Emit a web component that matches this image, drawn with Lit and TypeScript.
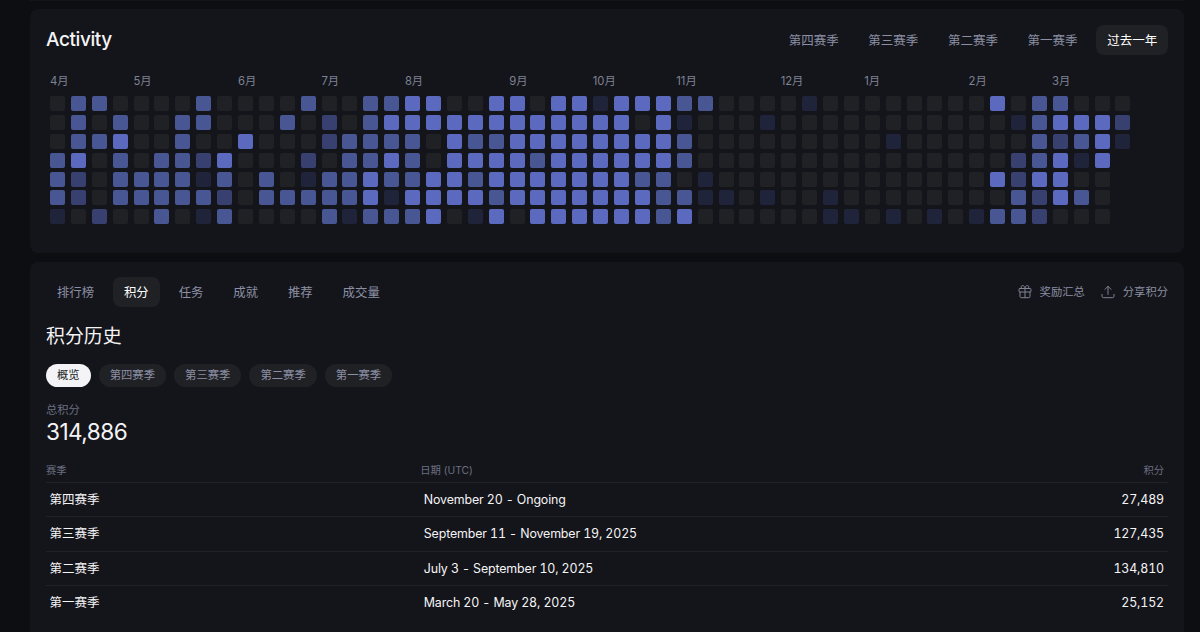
import { LitElement, html, css, svg } from "lit";
import { customElement } from "lit/decorators.js";

// One string per weekday: digits are intensity levels, a dot is a day still to come.
const DAYS: string[] = [
  "033000030000" + "3003344004404" + "4144433000010" + "0" + "0000004033000",
  "030300330003" + "0203444444444" + "4440410001000" + "0" + "0000000134442",
  "033400300400" + "0233330433444" + "4444430000000" + "0" + "0100000032341",
  "340303324000" + "2033430444434" + "4444430000000" + "0" + "000000023414.",
  "320333313030" + "1334334434444" + "4443301000000" + "0" + "000000424400.",
  "320333332033" + "3334144443444" + "4444331101001" + "0" + "000000032430.",
  "102003013000" + "0313334014044" + "4444340000001" + "1" + "010101332000.",
];

const MONTHS: [string, number][] = [
  ["4月", 0], ["5月", 4], ["6月", 9], ["7月", 13], ["8月", 17], ["9月", 22],
  ["10月", 26], ["11月", 30], ["12月", 35], ["1月", 39], ["2月", 44], ["3月", 48],
];

const SEASONS = [
  ["第四赛季", "November 20 - Ongoing", "27,489"],
  ["第三赛季", "September 11 - November 19, 2025", "127,435"],
  ["第二赛季", "July 3 - September 10, 2025", "134,810"],
  ["第一赛季", "March 20 - May 28, 2025", "25,152"],
];

const giftIcon = svg`
  <rect x="1" y="3.500" width="12" height="3.500" rx=".8"/>
  <path d="M2 7v4.500c0 .7.500 1.200 1.200 1.200h7.600c.7 0 1.200-.5 1.200-1.200V7M7 3.500v9.200M7 3.500H4.800a1.500 1.500 0 1 1 .9-2.600C6.500 1.500 7 3.500 7 3.500ZM7 3.500h2.200a1.500 1.500 0 1 0-.9-2.600C7.500 1.500 7 3.500 7 3.500Z"/>`;
const shareIcon = svg`<path d="M7 9.400V1.400M3.900 4.400 7 1.300l3.100 3.100M1 9.400v1.900c0 .8.600 1.400 1.400 1.400h9.200c.8 0 1.400-.6 1.400-1.400V9.400"/>`;

@customElement("app-root")
export class AppRoot extends LitElement {
  static styles = css`
    :host {
      display: block; box-sizing: border-box; height: 632px; overflow: hidden;
      background: #0d0e12; color: #f4f4f6; padding: 0 16px 0 30px;
      font-family: Inter, "Noto Sans CJK SC", sans-serif; font-size: 12.5px;
    }
    * { box-sizing: border-box; }
    .sliver { height: 1px; background: #14151a; }
    .card { background: #14151a; border-radius: 8px; padding: 16px; }
    .activity { margin-top: 8px; height: 244px; }
    .points { margin-top: 9px; height: 390px; padding-top: 15px; }
    .row { display: flex; align-items: center; justify-content: space-between; height: 30px; }
    .title { margin: 0; font-size: 19px; font-weight: 450; line-height: 32px; letter-spacing: -.4px; }
    .tabs { display: flex; gap: 8px; }
    .tab {
      height: 30px; line-height: 31px; padding: 0 10.800px; border-radius: 8px;
      color: #8b8fa3; white-space: nowrap;
    }
    .tab.on { background: #202125; color: #fff; }
    .wide .tab { font-size: 12.400px; padding: 0 10.950px; }
    .months {
      display: grid; grid-template-columns: repeat(52, 20.890px); height: 20px; margin: 16px 0 0 4px;
      font-size: 11.300px; line-height: 20px; color: #7e8295; white-space: nowrap;
    }
    .month { width: 0; }
    .grid { display: grid; grid-template-columns: repeat(52, 15px); gap: 3.900px 5.900px; margin: 5px 0 0 4px; }
    .day { height: 15px; border-radius: 2px; }
    .l0 { background: #202125; }
    .l1 { background: #20243a; }
    .l2 { background: #384070; }
    .l3 { background: #485694; }
    .l4 { background: #5b6abf; }
    .actions { display: flex; gap: 16px; color: #8b8fa3; font-size: 11.300px; line-height: 28px; height: 30px; }
    .action { display: flex; align-items: center; gap: 8px; }
    .icon { width: 14px; height: 14px; fill: none; stroke: #7e8295; stroke-width: 1; stroke-linecap: round; stroke-linejoin: round; }
    .history { margin: 15px 0 0; font-size: 18.900px; font-weight: 400; line-height: 30px; }
    .pills { display: flex; gap: 8px; margin-top: 12px; }
    .pill {
      height: 23px; line-height: 23px; padding: 0 11px; border-radius: 12px;
      font-size: 11.350px; background: #202125; color: #8b8fa3;
    }
    .pill.on { background: #f4f4f6; color: #202125; }
    .caption { margin-top: 14px; font-size: 11.300px; line-height: 18px; height: 17px; color: #6b6f82; }
    .total { font-size: 22.600px; line-height: 28px; letter-spacing: -.55px; }
    .head, .line { display: grid; grid-template-columns: 374.300px 1fr auto; }
    .head { margin-top: 15px; height: 21px; line-height: 19px; font-size: 10.300px; color: #6b6f82; }
    .head .end { padding-right: 4px; }
    .line { border-top: 1px solid #202227; height: 34.300px; line-height: 33px; padding: 0 4px 0 3.500px; }
    .latin { font-size: 12.400px; font-variant-numeric: tabular-nums; letter-spacing: -.13px; }
  `;

  render() {
    return html`
      <div class="sliver"></div>
      <section class="card activity">
        <div class="row">
          <h2 class="title">Activity</h2>
          <div class="tabs">
            ${["第四赛季", "第三赛季", "第二赛季", "第一赛季", "过去一年"].map(
              (t, i) => html`<span class="tab ${i === 4 ? "on" : ""}">${t}</span>`
            )}
          </div>
        </div>
        <div class="months">
          ${MONTHS.map(([m, c]) => html`<span class="month" style="grid-column:${c + 1}">${m}</span>`)}
        </div>
        <div class="grid">
          ${DAYS.map((r) => [...r].map((d) => html`<i class="day ${d === "." ? "" : "l" + d}"></i>`))}
        </div>
      </section>
      <section class="card points">
        <div class="row">
          <div class="tabs wide">
            ${["排行榜", "积分", "任务", "成就", "推荐", "成交量"].map(
              (t, i) => html`<span class="tab ${i === 1 ? "on" : ""}">${t}</span>`
            )}
          </div>
          <div class="actions">
            <span class="action"><svg class="icon" viewBox="0 0 14 14">${giftIcon}</svg>奖励汇总</span>
            <span class="action"><svg class="icon" viewBox="0 0 14 14">${shareIcon}</svg>分享积分</span>
          </div>
        </div>
        <h2 class="history">积分历史</h2>
        <div class="pills">
          ${["概览", "第四赛季", "第三赛季", "第二赛季", "第一赛季"].map(
            (t, i) => html`<span class="pill ${i === 0 ? "on" : ""}">${t}</span>`
          )}
        </div>
        <div class="caption">总积分</div>
        <div class="total">314,886</div>
        <div class="head"><span>赛季</span><span>日期 (UTC)</span><span class="end">积分</span></div>
        ${SEASONS.map(
          ([s, d, p]) => html`<div class="line"><span>${s}</span><span class="latin">${d}</span><span class="latin">${p}</span></div>`
        )}
      </section>
    `;
  }
}
